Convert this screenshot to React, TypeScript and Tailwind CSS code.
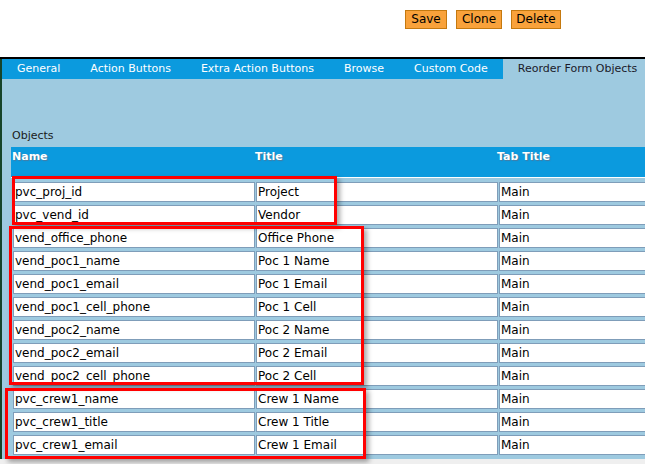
import React from 'react';

const rows: [string, string, string][] = [
  ['pvc_proj_id', 'Project', 'Main'],
  ['pvc_vend_id', 'Vendor', 'Main'],
  ['vend_office_phone', 'Office Phone', 'Main'],
  ['vend_poc1_name', 'Poc 1 Name', 'Main'],
  ['vend_poc1_email', 'Poc 1 Email', 'Main'],
  ['vend_poc1_cell_phone', 'Poc 1 Cell', 'Main'],
  ['vend_poc2_name', 'Poc 2 Name', 'Main'],
  ['vend_poc2_email', 'Poc 2 Email', 'Main'],
  ['vend_poc2_cell_phone', 'Poc 2 Cell', 'Main'],
  ['pvc_crew1_name', 'Crew 1 Name', 'Main'],
  ['pvc_crew1_title', 'Crew 1 Title', 'Main'],
  ['pvc_crew1_email', 'Crew 1 Email', 'Main'],
];

const tabs = ['General', 'Action Buttons', 'Extra Action Buttons', 'Browse', 'Custom Code', 'Reorder Form Objects'];

// annotation boxes drawn over the table
const marks = [
  { left: 12, top: 176, width: 325, height: 49 },
  { left: 9, top: 226, width: 355, height: 159 },
  { left: 5, top: 388, width: 361, height: 71 },
];

const font = { fontFamily: '"DejaVu Sans", Verdana, sans-serif' };

export default function App() {
  return (
    <div className="relative h-[464px] w-[645px] overflow-hidden bg-[#efefef]" style={font}>
      <div className="flex h-[57px] gap-[9px] bg-white pl-[405px] pt-[10px]">
        {[
          ['Save', 'w-[42px]'],
          ['Clone', 'w-[46px]'],
          ['Delete', 'w-[50px]'],
        ].map(([label, w]) => (
          <button
            key={label}
            className={`${w} h-[19px] border border-[#c5790f] bg-[#f9a23b] text-[12px] leading-[17px] text-black`}
          >
            {label}
          </button>
        ))}
      </div>

      <div className="h-[2px] bg-black" />

      <div className="border-l-2 border-[#16442a]">
        <div className="flex h-[20px] bg-[#0b9ade] text-[11px] leading-[19px]">
          {tabs.map((t, i) =>
            i === tabs.length - 1 ? (
              <div key={t} className="bg-[#9ecae0] px-[15px] text-[#1a1a2a] whitespace-nowrap">
                {t}
              </div>
            ) : (
              <div key={t} className="px-[15px] text-white whitespace-nowrap">
                {t}
              </div>
            )
          )}
        </div>

        <div className="bg-[#9ecae0] pl-[9px] pt-[50px] pb-[4px]">
          <div className="mb-[4px] pl-[1px] text-[11px] leading-[14px] text-[#1a1a1a]">Objects</div>

          <div className="grid h-[30px] grid-cols-[243px_242px_1fr] bg-[#0b9ade] pl-[1px] pt-[3px] text-[11px] font-bold leading-[14px] text-white [text-shadow:1px_1px_1px_#4a7aa0]">
            <div>Name</div>
            <div>Title</div>
            <div>Tab Title</div>
          </div>
          <div className="h-px bg-white" />

          <div className="flex flex-col gap-[3px] pl-[2px] pt-[4px]">
            {rows.map(([name, title, tab]) => (
              <div key={name} className="flex gap-px">
                {[name, title, tab].map((v, j) => (
                  <input
                    key={j}
                    readOnly
                    value={v}
                    className="h-[20px] w-[242px] shrink-0 border border-[#7f9db9] bg-white px-px text-[12px] leading-[15px] text-black outline-none"
                    style={font}
                  />
                ))}
              </div>
            ))}
          </div>
        </div>
      </div>

      {marks.map((m, i) => (
        <div
          key={i}
          className="absolute border-[3px] border-[#ff0000] shadow-[3px_3px_5px_rgba(0,0,0,0.35)]"
          style={{ left: m.left, top: m.top, width: m.width, height: m.height }}
        />
      ))}
    </div>
  );
}
